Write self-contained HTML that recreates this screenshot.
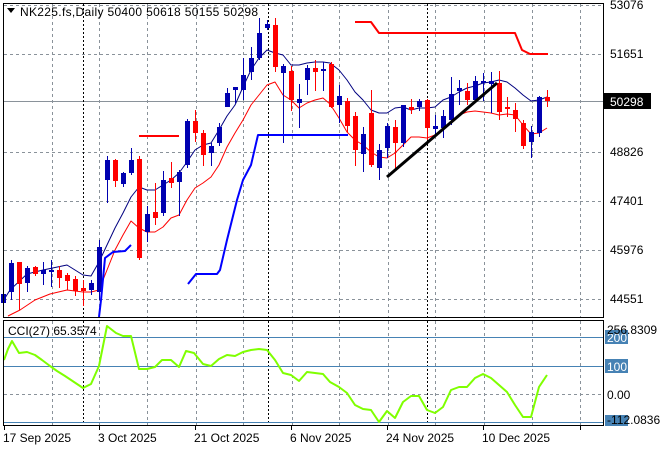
<!DOCTYPE html>
<html><head><meta charset="utf-8"><style>
html,body{margin:0;padding:0;background:#fff;width:660px;height:450px;overflow:hidden}
svg{display:block}
text{font-family:"Liberation Sans","DejaVu Sans",sans-serif;font-size:12px;fill:#000}
</style></head><body>
<svg id="s" width="660" height="450" xmlns="http://www.w3.org/2000/svg">
<rect width="660" height="450" fill="#fff"/>
<g id="grid"></g>
<g id="plot"></g>
<rect x="3.5" y="3.5" width="600" height="314" fill="none" stroke="#000"/>
<rect x="3.5" y="320.5" width="600" height="105" fill="none" stroke="#000"/>
<polygon points="7,8 15,8 11,13" fill="#000"/>
<text x="20" y="16" textLength="238" lengthAdjust="spacing">NK225.fs,Daily  50400 50618 50155 50298</text>
<text x="610" y="9">53076</text>
<text x="610" y="58">51651</text>
<rect x="604" y="93" width="47" height="16" fill="#000"/>
<text x="610" y="106" style="fill:#fff">50298</text>
<text x="610" y="156">48826</text>
<text x="610" y="205">47401</text>
<text x="610" y="254">45976</text>
<text x="610" y="303">44551</text>
<rect x="605" y="330" width="23" height="14" fill="#4682b4"/>
<text x="607" y="342" style="fill:#fff">200</text>
<rect x="605" y="359" width="23" height="14" fill="#4682b4"/>
<text x="607" y="371" style="fill:#fff">100</text>
<text x="607" y="399">0.00</text>
<rect x="605" y="415" width="23" height="11" fill="#4682b4"/>
<text x="607" y="334">256.8309</text>
<text x="607" y="424">-112.0836</text>
<text x="3" y="442">17 Sep 2025</text>
<text x="98" y="442">3 Oct 2025</text>
<text x="194" y="442">21 Oct 2025</text>
<text x="290" y="442">6 Nov 2025</text>
<text x="386" y="442">24 Nov 2025</text>
<text x="482" y="442">10 Dec 2025</text>
<text x="8" y="335">CCI(27) 65.3574</text>
</svg>
<script>
var NS="http://www.w3.org/2000/svg";
function el(p,t,a){var e=document.createElementNS(NS,t);for(var k in a)e.setAttribute(k,a[k]);p.appendChild(e);return e;}
var g=document.getElementById('grid'),p=document.getElementById('plot');
[5,54,152,201,250,299].forEach(function(y){el(g,'line',{x1:4,x2:603,y1:y+.5,y2:y+.5,stroke:'#8a929a','stroke-dasharray':'3,3'});});
el(g,'line',{x1:4,x2:603,y1:101.5,y2:101.5,stroke:'#8a929a'});
[52,99,147,196,243,292,339,388,435,484,532,580].forEach(function(x){
 el(g,'line',{x1:x+.5,x2:x+.5,y1:4,y2:317,stroke:'#8a929a','stroke-dasharray':'3,3'});
 el(g,'line',{x1:x+.5,x2:x+.5,y1:321,y2:425,stroke:'#8a929a','stroke-dasharray':'3,3'});});
[83,268,427].forEach(function(x){
 el(g,'line',{x1:x+.5,x2:x+.5,y1:4,y2:317,stroke:'#000','stroke-dasharray':'2,2'});
 el(g,'line',{x1:x+.5,x2:x+.5,y1:321,y2:425,stroke:'#000','stroke-dasharray':'2,2'});});
[337,366,422].forEach(function(y){el(g,'line',{x1:4,x2:603,y1:y+.5,y2:y+.5,stroke:'#4682b4'});});
el(g,'line',{x1:4,x2:603,y1:394.5,y2:394.5,stroke:'#8a929a','stroke-dasharray':'3,3'});
[4,99,195,291,387,483,580].forEach(function(x){el(g,'line',{x1:x+.5,x2:x+.5,y1:426,y2:430,stroke:'#000'});});
function pl(pts,c,w){el(p,'polyline',{points:pts,fill:'none',stroke:c,'stroke-width':w,'stroke-linejoin':'round'});}
pl("5,298 10,290 27,274 43,270 67,265 83,275 91,276 99,262 107,245 115,228 123,213 131,197 139,187 147,190 155,190 163,185 171,180 179,173 187,162 195,150 203,145 211,143 219,130 227,116 235,105 243,87 251,70 259,58 267,50 275,53 283,55 291,65 299,65 307,63 315,62 323,62 330,63 339,70 347,80 355,92 363,100 371,110 379,113 387,113 395,108 403,107 411,110 419,108 427,108 435,107 443,100 451,97 459,92 467,88 475,86 483,83 491,82 499,80 507,82 515,88 523,95 531,101 539,100 547,97","#000080",1);
pl("8,316 20,310 35,300 50,294 67,290 83,292 91,292 99,290 107,270 115,250 123,235 131,221 139,228 147,232 155,232 163,227 171,218 179,215 187,200 195,188 203,183 211,177 219,165 227,147 235,133 243,120 251,105 259,95 267,85 275,82 283,95 291,100 299,108 307,103 315,100 323,98 330,104 339,118 347,132 355,140 363,145 371,152 379,157 387,158 395,153 403,145 411,137 419,137 427,138 435,135 443,130 451,123 459,115 467,112 475,111 483,112 491,113 499,115 507,114 515,115 523,125 531,134 539,133 547,128","#ff0000",1);
var C=[[3,'b',294,303,290,306],[11,'b',263,292,260,300],[19,'r',262,284,262,310],[27,'b',268,283,266,292],[35,'r',267,274,266,276],[43,'b',270,274,262,285],[51,'b',270,272,260,287],[59,'r',270,278,266,288],[67,'r',275,281,273,290],[75,'r',279,291,276,296],[83,'r',288,291,280,306],[91,'b',283,290,280,295],[99,'b',247,292,240,300],[107,'b',160,180,156,203],[115,'r',160,181,159,187],[123,'b',173,184,172,187],[131,'b',160,173,148,175],[139,'r',159,258,156,260],[147,'b',214,232,206,242],[155,'r',212,218,183,225],[163,'b',180,213,171,216],[171,'r',178,183,162,188],[179,'b',172,182,170,216],[187,'b',121,165,119,168],[195,'r',121,133,110,142],[203,'r',133,155,130,166],[211,'b',146,153,143,166],[219,'b',127,143,123,146],[227,'b',93,107,88,107],[235,'b',87,90,87,103],[243,'b',75,90,58,100],[251,'b',58,72,47,80],[259,'b',33,58,18,60],[267,'b',24,28,20,30],[275,'r',25,67,18,72],[283,'b',66,73,64,143],[291,'r',71,100,66,111],[299,'b',99,103,84,128],[307,'b',68,80,65,95],[315,'r',68,72,60,91],[323,'b',69,71,62,91],[331,'r',64,107,62,108],[339,'b',96,105,85,123],[347,'r',101,126,98,132],[355,'r',116,150,112,166],[363,'b',134,154,127,172],[371,'r',113,165,90,167],[379,'b',150,168,144,180],[387,'b',126,148,123,158],[395,'r',127,143,120,170],[403,'b',105,143,105,147],[411,'r',107,110,99,114],[419,'b',101,107,99,111],[427,'r',100,128,99,140],[435,'b',126,129,115,135],[443,'b',116,128,110,138],[451,'b',94,120,77,125],[459,'b',88,91,80,105],[467,'r',91,100,83,105],[475,'b',81,100,76,101],[483,'b',81,83,73,101],[491,'b',81,84,72,113],[499,'r',83,112,71,120],[507,'r',107,109,97,117],[515,'r',110,119,103,132],[523,'r',123,146,120,149],[531,'b',132,142,126,158],[539,'b',97,133,96,137],[547,'r',97,101,90,107]];
C.forEach(function(c){var col=c[1]=='b'?'#0000b0':'#ff0000';
 el(p,'line',{x1:c[0]+.5,x2:c[0]+.5,y1:c[4],y2:c[5],stroke:col});
 el(p,'rect',{x:c[0]-2,y:c[2],width:5,height:Math.max(2,c[3]-c[2]),fill:col});});
pl("99,317 101,300 105,258 113,252 125,251 131,245","#0000ff",2);
pl("188,284 196,274 217,274 220,270 227,240 237,200 243,180 251,165 258,135 267,135 348,135","#0000ff",2);
pl("139,136 179,136","#ff0000",2);
pl("355,22 371,22 379,33 515,33 522,50 530,54 548,54","#ff0000",2);
el(p,'line',{x1:387,y1:177,x2:497,y2:83,stroke:'#000','stroke-width':3});
pl("4,360 8,349 12,341 19,353 27,352 35,355 42,360 50,366 57,371 65,376 74,382 83,388 91,384 99,366 107,326 116,333 123,336 131,336 139,369 147,369 155,367 162,360 171,360 179,367 186,351 194,353 203,364 211,366 219,359 227,355 235,356 243,352 251,350 259,349 267,350 275,360 283,373 291,375 299,381 307,372 315,373 323,374 330,382 339,387 347,393 355,405 363,409 371,410 379,422 387,411 395,418 403,402 411,396 419,396 427,410 435,413 443,407 451,390 459,387 467,387 475,378 483,374 491,378 499,385 507,392 515,405 523,417 531,417 539,387 547,375","#7fff00",2);
</script>
</body></html>
